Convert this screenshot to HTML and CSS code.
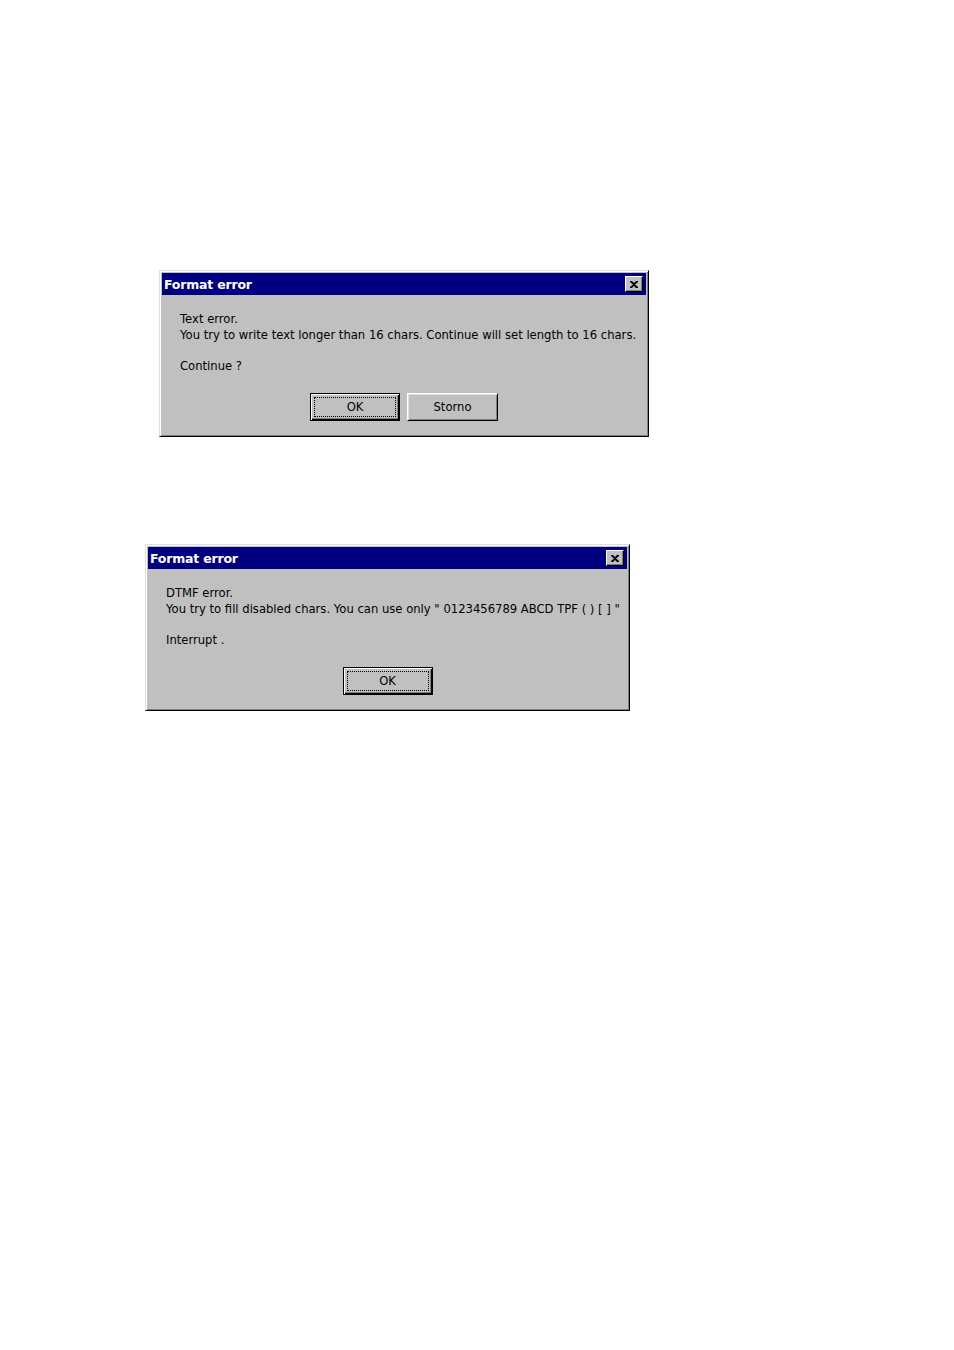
FILE: index.html
```html
<!DOCTYPE html>
<html>
<head>
<meta charset="utf-8">
<link rel="stylesheet" href="styles.css">
</head>
<body>
<div class="page">
  <div class="dialog d1">
    <div class="titlebar">
      <span class="title">Format error</span>
      <span class="close"><svg width="8" height="7" viewBox="0 0 8 7"><path d="M0 0h2l2 2 2-2h2v1L5 3.5 8 6v1H6L4 5 2 7H0V6l3-2.5L0 1z" fill="#000"/></svg></span>
    </div>
    <div class="content">
      <p class="msg">Text error.<br>You try to write text longer than 16 chars. Continue will set length to 16 chars.<br><br>Continue ?</p>
      <div class="buttons">
        <button class="btn default"><span class="focus">OK</span></button>
        <button class="btn">Storno</button>
      </div>
    </div>
  </div>
  <div class="dialog d2">
    <div class="titlebar">
      <span class="title">Format error</span>
      <span class="close"><svg width="8" height="7" viewBox="0 0 8 7"><path d="M0 0h2l2 2 2-2h2v1L5 3.5 8 6v1H6L4 5 2 7H0V6l3-2.5L0 1z" fill="#000"/></svg></span>
    </div>
    <div class="content">
      <p class="msg">DTMF error.<br>You try to fill disabled chars. You can use only " 0123456789 ABCD TPF ( ) [ ] "<br><br>Interrupt .</p>
      <div class="buttons">
        <button class="btn default"><span class="focus">OK</span></button>
      </div>
    </div>
  </div>
</div>
</body>
</html>
```
FILE: styles.css
```css
html, body {
  margin: 0;
  padding: 0;
  background: #fff;
}
.page {
  display: flex;
  flex-direction: column;
  align-items: flex-start;
  font-family: "DejaVu Sans", Verdana, sans-serif;
  font-size: 11.6px;
  color: #000;
}
.dialog {
  box-sizing: border-box;
  height: 167px;
  background: #c0c0c0;
  border: 1px solid;
  border-color: #dfdfdf #000 #000 #dfdfdf;
  box-shadow: inset 1px 1px #fff, inset -1px -1px #808080;
  padding: 2px;
  display: flex;
  flex-direction: column;
}
.d1 {
  width: 490px;
  margin: 270px 0 0 159px;
}
.d2 {
  width: 485px;
  margin: 107px 0 0 145px;
}
.titlebar {
  height: 22px;
  background: #000080;
  color: #fff;
  display: flex;
  align-items: center;
  justify-content: space-between;
  padding: 0 3px 0 2px;
}
.title {
  font-weight: bold;
  font-size: 12.5px;
  letter-spacing: -0.2px;
}
.close {
  box-sizing: border-box;
  width: 18px;
  height: 16px;
  background: #c0c0c0;
  border: 1px solid;
  border-color: #fff #000 #000 #fff;
  box-shadow: inset -1px -1px #808080;
  display: flex;
  align-items: center;
  justify-content: center;
}
.content {
  flex: 1;
  display: flex;
  flex-direction: column;
  padding: 17px 0 0 18px;
}
.msg {
  margin: 0;
  line-height: 15.7px;
  white-space: nowrap;
}
.buttons {
  display: flex;
  justify-content: center;
  gap: 7px;
  margin-top: 18px;
  padding-right: 18px;
}
.btn {
  box-sizing: border-box;
  width: 91px;
  height: 28px;
  background: #c0c0c0;
  font-family: "DejaVu Sans", Verdana, sans-serif;
  font-size: 11.6px;
  color: #000;
  padding: 0;
  border: 1px solid;
  border-color: #fff #000 #000 #fff;
  box-shadow: inset 1px 1px #dfdfdf, inset -1px -1px #808080;
  display: flex;
  align-items: center;
  justify-content: center;
}
.btn.default {
  width: 90px;
  border: 1px solid #000;
  box-shadow: inset 1px 1px #fff, inset -1px -1px #000, inset -2px -2px #808080;
  padding: 3px;
}
.focus {
  box-sizing: border-box;
  width: 100%;
  height: 100%;
  border: 1px dotted #000;
  display: flex;
  align-items: center;
  justify-content: center;
}
```
